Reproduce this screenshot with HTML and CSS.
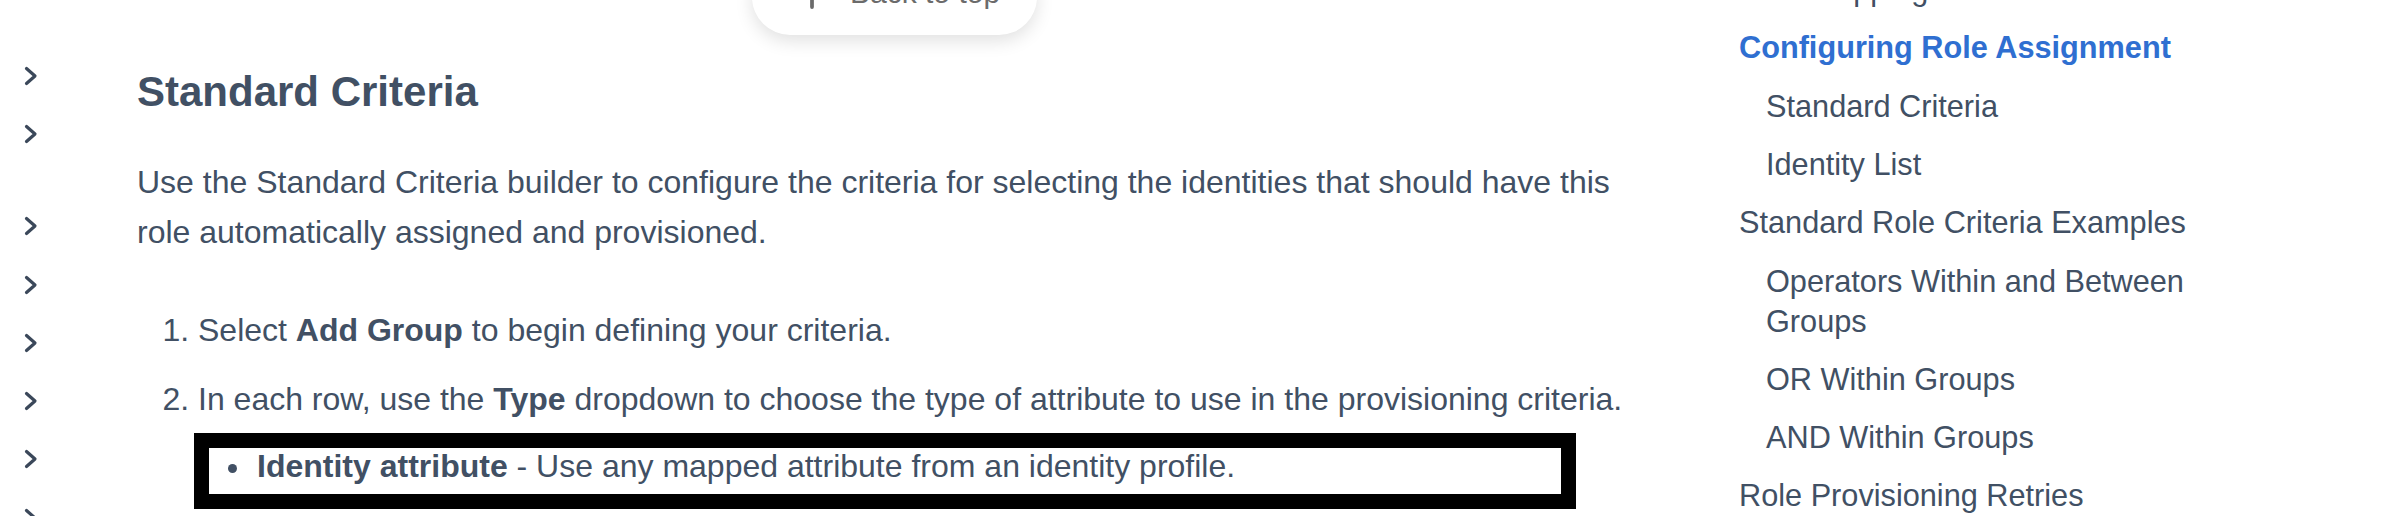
FILE: index.html
```html
<!DOCTYPE html>
<html lang="en">
<head>
  <meta charset="UTF-8">
  <title>Configuring Role Assignment</title>
  <link rel="stylesheet" href="styles.css">
</head>
<body>
  <div class="page">
    <!-- left navigation, collapsed -->
    <nav class="sidenav">
      <ul>
        <li><svg class="chev" viewBox="0 0 14 20"><polyline points="2.5,2.5 11,10 2.5,17.5"/></svg></li>
        <li><svg class="chev" viewBox="0 0 14 20"><polyline points="2.5,2.5 11,10 2.5,17.5"/></svg></li>
        <li class="spacer"></li>
        <li><svg class="chev" viewBox="0 0 14 20"><polyline points="2.5,2.5 11,10 2.5,17.5"/></svg></li>
        <li><svg class="chev" viewBox="0 0 14 20"><polyline points="2.5,2.5 11,10 2.5,17.5"/></svg></li>
        <li><svg class="chev" viewBox="0 0 14 20"><polyline points="2.5,2.5 11,10 2.5,17.5"/></svg></li>
        <li><svg class="chev" viewBox="0 0 14 20"><polyline points="2.5,2.5 11,10 2.5,17.5"/></svg></li>
        <li><svg class="chev" viewBox="0 0 14 20"><polyline points="2.5,2.5 11,10 2.5,17.5"/></svg></li>
        <li><svg class="chev" viewBox="0 0 14 20"><polyline points="2.5,2.5 11,10 2.5,17.5"/></svg></li>
      </ul>
    </nav>

    <!-- article -->
    <main class="content">
      <h2>Standard Criteria</h2>
      <p>Use the Standard Criteria builder to configure the criteria for selecting the identities that should have this role automatically assigned and provisioned.</p>
      <ol class="steps">
        <li>Select <strong>Add Group</strong> to begin defining your criteria.</li>
        <li>In each row, use the <strong>Type</strong> dropdown to choose the type of attribute to use in the provisioning criteria.
          <ul class="types">
            <li><strong>Identity attribute</strong> - Use any mapped attribute from an identity profile.</li>
          </ul>
        </li>
      </ol>
    </main>

    <!-- on this page -->
    <aside class="toc">
      <ul>
        <li>Role Mapping</li>
        <li class="active">Configuring Role Assignment</li>
        <li class="sub">Standard Criteria</li>
        <li class="sub">Identity List</li>
        <li>Standard Role Criteria Examples</li>
        <li class="sub">Operators Within and Between Groups</li>
        <li class="sub">OR Within Groups</li>
        <li class="sub">AND Within Groups</li>
        <li>Role Provisioning Retries</li>
      </ul>
    </aside>
  </div>

  <a class="back-top" href="#">
    <svg class="up" viewBox="0 0 24 24"><path d="M12 20V5M5 12l7-7 7 7"/></svg>
    <span>Back to top</span>
  </a>
</body>
</html>
```

FILE: styles.css
```css
body {
  margin: 0;
  padding: 0;
  background: #fff;
  font-family: 'Liberation Sans', Arial, Helvetica, sans-serif;
  color: #415064;
  overflow: hidden;
  height: 516px;
}
.page {
  display: flex;
  align-items: flex-start;
}

/* left nav */
.sidenav {
  flex: 0 0 62px;
}
.sidenav ul {
  list-style: none;
  margin: 0;
  padding: 46.85px 0 0 0;
}
.sidenav li {
  height: 58.3px;
  display: flex;
  align-items: center;
  padding-left: 24px;
}
.sidenav li.spacer {
  height: 33.7px;
}
.chev {
  width: 14px;
  height: 20px;
  fill: none;
  stroke: #3b485a;
  stroke-width: 3.2;
  stroke-linecap: round;
  stroke-linejoin: round;
}

/* article */
.content {
  flex: 0 0 1677px;
  box-sizing: border-box;
  padding: 67px 89px 0 75px;
  font-size: 32px;
  line-height: 50px;
}
.content h2 {
  margin: 0;
  font-size: 42px;
  line-height: 50px;
  font-weight: bold;
}
.content p {
  margin: 40px 0 0 0;
}
.steps {
  margin: 48px 0 0 0;
  padding-left: 61px;
}
.steps > li + li {
  margin-top: 19px;
}
.types {
  list-style: none;
  width: 1382px;
  box-sizing: border-box;
  margin: 9px 0 0 -4px;
  padding: 2px 0 12px 48px;
  border: 15px solid #000;
  line-height: 32px;
}
.types li {
  position: relative;
}
.types li::before {
  content: '';
  position: absolute;
  left: -29px;
  top: 14px;
  width: 9px;
  height: 9px;
  border-radius: 50%;
  background: #415064;
}

/* right toc */
.toc {
  flex: 0 0 490px;
  font-size: 30.7px;
  line-height: 40px;
}
.toc ul {
  list-style: none;
  margin: -39px 0 0 0;
  padding: 0;
}
.toc li {
  padding: 9.15px 0;
}
.toc li.sub {
  padding-left: 27px;
}
.toc li.active {
  color: #2f6fd1;
  font-weight: bold;
}

/* floating pill */
.back-top {
  position: absolute;
  left: 752px;
  top: -41px;
  width: 285px;
  height: 76px;
  box-sizing: border-box;
  padding: 0 0 8px 45px;
  display: flex;
  align-items: center;
  gap: 23px;
  background: #fff;
  border-radius: 38px;
  box-shadow: 0 6px 18px rgba(0, 0, 0, 0.12);
  color: #6b6b6b;
  text-decoration: none;
  font-size: 30px;
  line-height: 30px;
}
.back-top .up {
  width: 30px;
  height: 30px;
  margin-top: 8px;
  fill: none;
  stroke: #6b6b6b;
  stroke-width: 3;
  stroke-linecap: round;
  stroke-linejoin: round;
}
```
